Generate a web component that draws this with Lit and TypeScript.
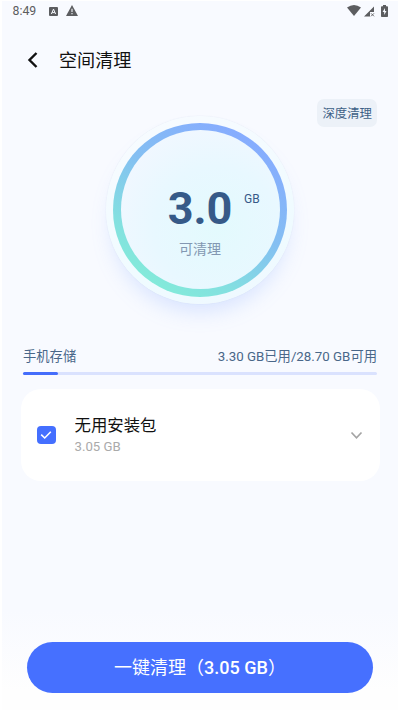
import { LitElement, html, css } from "lit";
import { customElement, property } from "lit/decorators.js";

@customElement("status-bar")
class StatusBar extends LitElement {
  static styles = css`
    :host { display: flex; align-items: center; height: 20px; padding: 0 10.5px 0 10.5px; color: #5c5d60; font-size: 12.3px; line-height: 20px; }
    .time { width: 36px; }
    svg { display: block; fill: currentColor; }
    .alert { margin: -1px 0 0 8px; }
    .wifi { margin: -1px 0 0 auto; }
    .signal { margin-left: 3px; }
    .battery { margin: -1px 0 0 6px; }
  `;
  render() {
    return html`
      <span class="time">8:49</span>
      <svg width="9" height="9" viewBox="0 0 9 9"><rect width="9" height="9" rx="1"/><path d="M2.4 7 4.5 2.1 6.6 7M3.2 5.6H5.8" fill="none" stroke="#f8faff" stroke-width="1"/></svg>
      <svg class="alert" width="12" height="11" viewBox="0 0 12 11"><path d="M6 0 12 11H0Z"/><path d="M6 3.8V7M6 8.1V9.3" stroke="#f8faff" stroke-width="1.1"/></svg>
      <svg class="wifi" width="14" height="11" viewBox="0 0 14 11"><path d="M0 2.6Q7-2.4 14 2.6L7 11Z"/></svg>
      <svg class="signal" width="11" height="11" viewBox="0 0 11 11"><path d="M0 10.5 10 .5V6H6V10.5Z"/><path d="M7 7.3 10 10.3M10 7.3 7 10.3" stroke="currentColor" stroke-width=".9"/></svg>
      <svg class="battery" width="7" height="12" viewBox="0 0 7 12"><path d="M2 0H5V1.2H6.2Q7 1.2 7 2V11.2Q7 12 6.2 12H.8Q0 12 0 11.2V2Q0 1.2.8 1.2H2Z"/><path d="M4 3 1.6 7H3.2V10L5.5 6H4Z" fill="#f8faff"/></svg>
    `;
  }
}

@customElement("clean-dial")
class CleanDial extends LitElement {
  @property() value = "";
  @property() unit = "";
  @property() label = "";
  static styles = css`
    :host { display: block; width: 188px; height: 188px; box-sizing: border-box; padding: 7px; border-radius: 50%; background: linear-gradient(160deg, #f8fbff, #effbff 70%, #eff8ff); box-shadow: 0 14px 22px -8px rgba(120, 160, 255, .28), 0 0 1px rgba(160, 180, 210, .4); }
    .ring { height: 100%; box-sizing: border-box; padding: 7.5px; border-radius: 50%; background: linear-gradient(212deg, #86abff 12%, #84bff2 45%, #83e0e0 72%, #83eed7 92%); }
    .face { height: 100%; box-sizing: border-box; padding-top: 49px; border-radius: 50%; background: radial-gradient(circle at 60% 62%, #e3fafd 0, #e8f8ff 45%, #f4f7ff 90%); }
    .amount { position: relative; height: 60px; text-align: center; color: #365a88; font-size: 45px; line-height: 60px; font-weight: 700; }
    .unit { position: absolute; left: 123.5px; top: 9.5px; font-size: 12px; line-height: 20px; font-weight: 400; }
    .label { text-align: center; color: #8398b2; font-size: 14px; line-height: 20px; }
  `;
  render() {
    return html`<div class="ring"><div class="face">
      <div class="amount">${this.value}<span class="unit">${this.unit}</span></div>
      <div class="label">${this.label}</div>
    </div></div>`;
  }
}

@customElement("app-root")
class AppRoot extends LitElement {
  private usedShare = 10;
  static styles = css`
    :host { display: flex; flex-direction: column; box-sizing: border-box; height: 710px; padding: 1px 2px 17.5px; overflow: hidden; background: linear-gradient(#f8faff 0 610px, #fefefe 690px) 2px 1px / 396px 709px no-repeat #fff; font-family: Roboto, "Noto Sans CJK SC", sans-serif; }
    header { display: flex; align-items: center; height: 40px; margin-top: 19px; padding-left: 25px; color: #111; font-size: 18.1px; line-height: 41px; }
    header svg { margin-right: 20px; }
    .deep { align-self: flex-end; box-sizing: border-box; height: 28px; margin: 19px 21px 0; padding: 0 5px 0 5.5px; border-radius: 7px; background: #ecf1f8; color: #3d6086; font-size: 12.4px; line-height: 29px; }
    clean-dial { align-self: center; margin-top: -11.5px; }
    .storage { margin: 43px 21px 0; color: #496789; font-size: 13.3px; }
    .row { display: flex; justify-content: space-between; line-height: 20px; }
    .track { height: 3px; margin-top: 5.5px; border-radius: 2px; background: #dae2fe; }
    .used { height: 100%; border-radius: 2px; background: #446dfb; }
    .card { display: flex; align-items: center; box-sizing: border-box; height: 92px; margin: 14px 18.5px 0; padding: 0 17px 0 16.5px; border-radius: 20px; background: #fff; }
    .check { display: grid; place-items: center; width: 18.5px; height: 18.5px; margin-right: 19px; border-radius: 4px; background: #446fff; }
    .info { flex: 1; padding-top: 1px; }
    .name { color: #111; font-size: 16.4px; line-height: 22px; }
    .size { color: #aaa; font-size: 13.2px; line-height: 20px; }
    button { height: 51px; margin: auto 25px 0; padding: 0; border: 0; border-radius: 26px; background: #4670ff; color: #fff; font: 500 18px/51px Roboto, "Noto Sans CJK SC", sans-serif; }
    .hans { font-weight: 400; }
  `;
  render() {
    return html`
      <status-bar></status-bar>
      <header><svg width="12" height="18" viewBox="0 0 12 18"><path d="M9.5 2 2.5 9 9.5 16" fill="none" stroke="#111" stroke-width="2.4"/></svg>空间清理</header>
      <div class="deep">深度清理</div>
      <clean-dial value="3.0" unit="GB" label="可清理"></clean-dial>
      <section class="storage">
        <div class="row"><span>手机存储</span><span>3.30 GB已用/28.70 GB可用</span></div>
        <div class="track"><div class="used" style="width:${this.usedShare}%"></div></div>
      </section>
      <section class="card">
        <div class="check"><svg width="12" height="10" viewBox="0 0 12 10"><path d="M1.2 4.7 4.7 8 10.8 1.7" fill="none" stroke="#fff" stroke-width="1.6"/></svg></div>
        <div class="info"><div class="name">无用安装包</div><div class="size">3.05 GB</div></div>
        <svg width="13" height="9" viewBox="0 0 13 9"><path d="M1.5 1.5 6.5 6.8 11.5 1.5" fill="none" stroke="#a4a4a4" stroke-width="1.7"/></svg>
      </section>
      <button><span class="hans">一键清理（</span>3.05 GB<span class="hans">）</span></button>
    `;
  }
}
